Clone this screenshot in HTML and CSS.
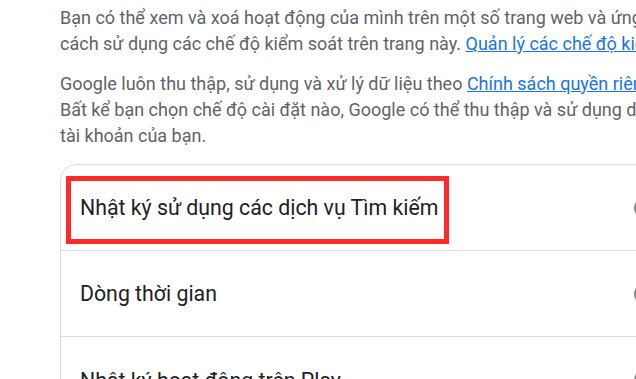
FILE: index.html
```html
<!DOCTYPE html>
<html lang="vi">
<head>
    <meta charset="UTF-8">
    <title>Kiểm soát hoạt động</title>
    <link rel="stylesheet" href="styles.css">
</head>
<body>
    <div class="page">
        <p class="intro">
            Bạn có thể xem và xoá hoạt động của mình trên một số trang web và ứng dụng của Google. Tìm hiểu thêm về<br>
            cách sử dụng các chế độ kiểm soát trên trang này. <a href="#">Quản lý các chế độ kiểm soát</a>
        </p>
        <p class="intro">
            Google luôn thu thập, sử dụng và xử lý dữ liệu theo <a href="#">Chính sách quyền riêng tư</a> của Google.<br>
            Bất kể bạn chọn chế độ cài đặt nào, Google có thể thu thập và sử dụng dữ liệu để cung cấp dịch vụ cho<br>
            tài khoản của bạn.
        </p>

        <div class="card">
            <div class="row">
                <span class="row-title">Nhật ký sử dụng các dịch vụ Tìm kiếm</span>
                <span class="row-icon"></span>
                <!-- annotation box drawn over the first row -->
                <div class="highlight"></div>
            </div>
            <div class="row">
                <span class="row-title">Dòng thời gian</span>
                <span class="row-icon"></span>
            </div>
            <div class="row">
                <span class="row-title">Nhật ký hoạt động trên Play</span>
                <span class="row-icon"></span>
            </div>
        </div>
    </div>
</body>
</html>
```

FILE: styles.css
```css
* {
    box-sizing: border-box;
}

html, body {
    margin: 0;
    height: 100%;
}

body {
    background: #fff;
    font-family: Roboto, "Noto Sans", Arial, sans-serif;
    overflow: hidden;
}

.page {
    padding: 5px 0 0 60px;
    width: 1100px;
}

.intro {
    margin: 0 0 14px;
    font-size: 18px;
    line-height: 26px;
    color: #5f6368;
    white-space: nowrap;
}

.intro a {
    color: #1a73e8;
    text-decoration: underline;
}

/* Settings card */
.card {
    margin-top: 15px;
    border: 1px solid #dadce0;
    border-radius: 16px;
    width: 900px;
}

.row {
    position: relative;
    display: flex;
    align-items: center;
    justify-content: space-between;
    height: 86px;
    padding: 0 0 0 19px;
    border-bottom: 1px solid #dadce0;
}

.row:last-child {
    border-bottom: none;
}

.row-title {
    font-size: 21.3px;
    color: #202124;
}

.row-icon {
    position: absolute;
    left: 573px;
    top: 50%;
    width: 20px;
    height: 20px;
    margin-top: -10px;
    border: 2px solid #80868b;
    border-radius: 50%;
}

.highlight {
    position: absolute;
    left: 5px;
    top: 11px;
    width: 383px;
    height: 68px;
    border: 5px solid #ff2a2a;
}
```
